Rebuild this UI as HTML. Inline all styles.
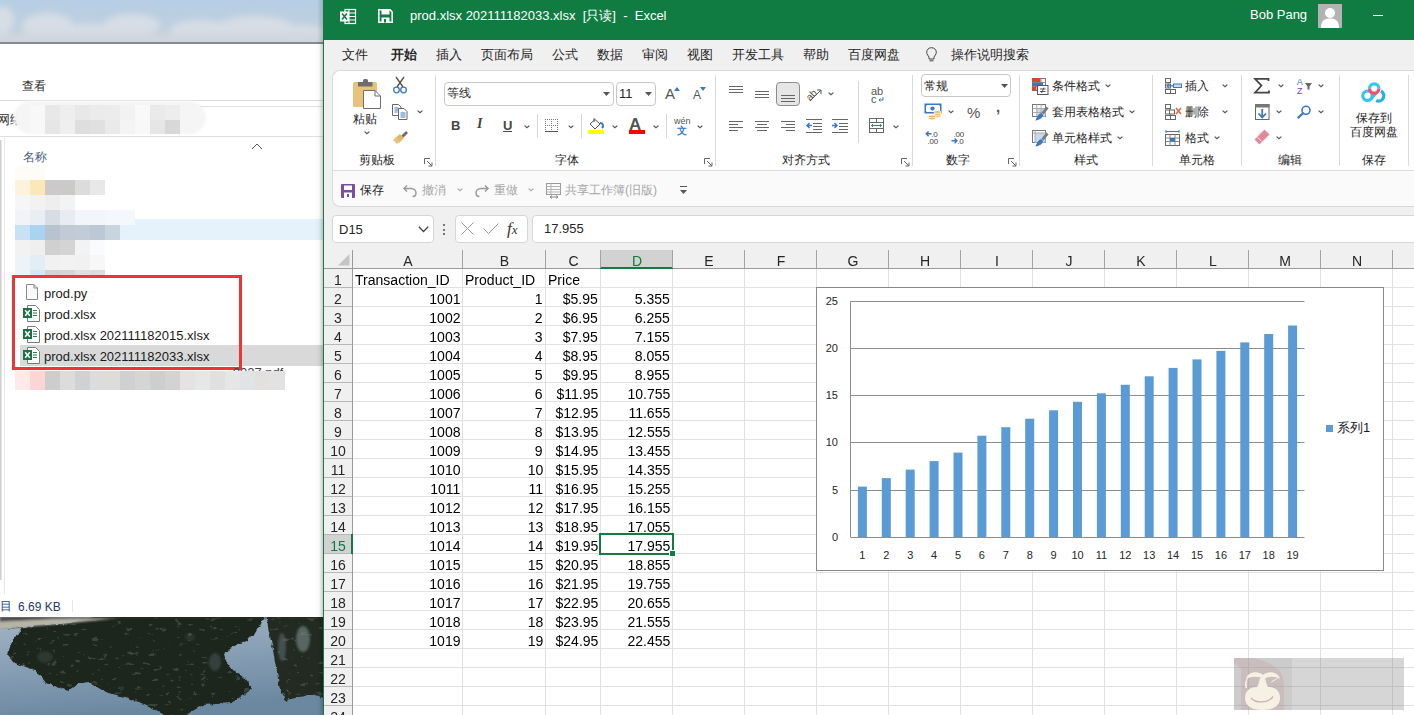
<!DOCTYPE html><html><head><meta charset="utf-8"><style>

*{box-sizing:border-box}
html,body{margin:0;padding:0}
body{width:1414px;height:715px;overflow:hidden;position:relative;font-family:"Liberation Sans",sans-serif;background:#fff;color:#262626}
.a{position:absolute}
.t{position:absolute;white-space:pre;line-height:1}
svg{position:absolute;overflow:visible}

</style></head><body>
<svg style="left:0;top:0;overflow:hidden" width="323" height="44" viewBox="0 0 323 44">
<defs><filter id="cb" x="-20%" y="-50%" width="140%" height="200%"><feGaussianBlur stdDeviation="3"/></filter>
<linearGradient id="sg" x1="0" y1="0" x2="0" y2="1"><stop offset="0" stop-color="#b6cee4"/><stop offset="0.45" stop-color="#bccfe1"/><stop offset="1" stop-color="#c6d0da"/></linearGradient></defs>
<rect width="323" height="43" fill="url(#sg)"/>
<g filter="url(#cb)" fill="#d6dde5">
<ellipse cx="2" cy="20" rx="12" ry="14"/>
<ellipse cx="48" cy="26" rx="26" ry="13"/>
<ellipse cx="90" cy="34" rx="40" ry="10"/>
<ellipse cx="132" cy="25" rx="28" ry="11"/>
<ellipse cx="200" cy="30" rx="30" ry="10"/>
<ellipse cx="255" cy="27" rx="38" ry="11"/>
<ellipse cx="300" cy="34" rx="30" ry="9"/>
<rect x="-10" y="34" width="343" height="12" fill="#d0d6dd"/>
</g>
<rect x="0" y="42" width="323" height="2" fill="#858a91"/>
</svg>
<div class="a" style="left:0px;top:44px;width:323px;height:573px;background:#fff"></div>
<div class="t" style="left:22px;top:80px;font-size:12px;color:#1f1f1f">查看</div>
<div class="a" style="left:0px;top:100px;width:323px;height:1px;background:#dcdcdc"></div>
<div class="t" style="left:-3px;top:113px;font-size:13px;color:#333">网络</div>
<div class="a" style="left:14px;top:101px;width:192px;height:33px;border-radius:17px;background:#f5f5f5;filter:blur(1px)"></div>
<div class="a" style="left:30px;top:105px;width:15px;height:15px;background:#f8f8f8"></div>
<div class="a" style="left:30px;top:120px;width:15px;height:14px;background:#f8f8f8"></div>
<div class="a" style="left:45px;top:105px;width:15px;height:15px;background:#e8e8e8"></div>
<div class="a" style="left:45px;top:120px;width:15px;height:14px;background:#e6e6e6"></div>
<div class="a" style="left:60px;top:105px;width:15px;height:15px;background:#eeeeee"></div>
<div class="a" style="left:60px;top:120px;width:15px;height:14px;background:#efefef"></div>
<div class="a" style="left:75px;top:105px;width:15px;height:15px;background:#e8e8e8"></div>
<div class="a" style="left:75px;top:120px;width:15px;height:14px;background:#dedede"></div>
<div class="a" style="left:90px;top:105px;width:15px;height:15px;background:#ebebeb"></div>
<div class="a" style="left:90px;top:120px;width:15px;height:14px;background:#e0e0e0"></div>
<div class="a" style="left:105px;top:105px;width:15px;height:15px;background:#ececec"></div>
<div class="a" style="left:105px;top:120px;width:15px;height:14px;background:#eaeaea"></div>
<div class="a" style="left:120px;top:105px;width:15px;height:15px;background:#f2f2f2"></div>
<div class="a" style="left:120px;top:120px;width:15px;height:14px;background:#f4f4f4"></div>
<div class="a" style="left:135px;top:105px;width:15px;height:15px;background:#f9f9f9"></div>
<div class="a" style="left:135px;top:120px;width:15px;height:14px;background:#f8f8f8"></div>
<div class="a" style="left:150px;top:105px;width:15px;height:15px;background:#eaeaea"></div>
<div class="a" style="left:150px;top:120px;width:15px;height:14px;background:#e6e6e6"></div>
<div class="a" style="left:165px;top:105px;width:15px;height:15px;background:#ededed"></div>
<div class="a" style="left:165px;top:120px;width:15px;height:14px;background:#d8d8d8"></div>
<div class="a" style="left:200px;top:106px;width:123px;height:1px;background:#e0e0e0"></div>
<div class="a" style="left:0px;top:136px;width:323px;height:1px;background:#e0e0e0"></div>
<div class="a" style="left:4px;top:138px;width:1px;height:456px;background:#e6e6e6"></div>
<div class="a" style="left:0px;top:140px;width:2px;height:440px;background:linear-gradient(90deg,#c6c6c6,#eeeeee)"></div>
<div class="t" style="left:23px;top:151px;font-size:12px;color:#4c607a">名称</div>
<svg style="left:251px;top:143px" width="12" height="7" viewBox="0 0 12 7"><path d="M1 6 L6 1 L11 6" fill="none" stroke="#555" stroke-width="1"/></svg>
<div class="a" style="left:120px;top:219px;width:203px;height:21px;background:#e5f1fb"></div>
<div class="a" style="left:15px;top:165px;width:30px;height:15px;background:#fefcf6;border-radius:8px 8px 0 0"></div>
<div class="a" style="left:15px;top:180px;width:15px;height:15px;background:#fdf3dc"></div>
<div class="a" style="left:30px;top:180px;width:15px;height:15px;background:#fbe9b5"></div>
<div class="a" style="left:45px;top:180px;width:15px;height:15px;background:#cbc9c9"></div>
<div class="a" style="left:60px;top:180px;width:15px;height:15px;background:#cacac8"></div>
<div class="a" style="left:75px;top:180px;width:15px;height:15px;background:#dcdcdc"></div>
<div class="a" style="left:90px;top:180px;width:15px;height:15px;background:#e8e8e8"></div>
<div class="a" style="left:15px;top:195px;width:15px;height:15px;background:#f6f6f6"></div>
<div class="a" style="left:30px;top:195px;width:15px;height:15px;background:#f2f2f2"></div>
<div class="a" style="left:45px;top:195px;width:15px;height:15px;background:#eeeeee"></div>
<div class="a" style="left:60px;top:195px;width:15px;height:15px;background:#f2f3f4"></div>
<div class="a" style="left:15px;top:210px;width:15px;height:15px;background:#f0f4f8"></div>
<div class="a" style="left:30px;top:210px;width:15px;height:15px;background:#e9eef3"></div>
<div class="a" style="left:45px;top:210px;width:15px;height:15px;background:#d8dde5"></div>
<div class="a" style="left:60px;top:210px;width:15px;height:15px;background:#e8ecf2"></div>
<div class="a" style="left:75px;top:210px;width:15px;height:15px;background:#f2f6fb"></div>
<div class="a" style="left:90px;top:210px;width:15px;height:15px;background:#f2f6fb"></div>
<div class="a" style="left:105px;top:210px;width:15px;height:15px;background:#f4f7fb"></div>
<div class="a" style="left:120px;top:210px;width:15px;height:15px;background:#f4f7fb"></div>
<div class="a" style="left:15px;top:225px;width:15px;height:15px;background:#c8e2f5"></div>
<div class="a" style="left:30px;top:225px;width:15px;height:15px;background:#a9d3ee"></div>
<div class="a" style="left:45px;top:225px;width:15px;height:15px;background:#b7c4d0"></div>
<div class="a" style="left:60px;top:225px;width:15px;height:15px;background:#c1cad5"></div>
<div class="a" style="left:75px;top:225px;width:15px;height:15px;background:#c1ccd8"></div>
<div class="a" style="left:90px;top:225px;width:15px;height:15px;background:#bcc8d4"></div>
<div class="a" style="left:105px;top:225px;width:15px;height:15px;background:#c8d4de"></div>
<div class="a" style="left:15px;top:240px;width:15px;height:15px;background:#f2f2f2"></div>
<div class="a" style="left:30px;top:240px;width:15px;height:15px;background:#efefef"></div>
<div class="a" style="left:45px;top:240px;width:15px;height:15px;background:#d0d0d0"></div>
<div class="a" style="left:60px;top:240px;width:15px;height:15px;background:#d4d4d4"></div>
<div class="a" style="left:75px;top:240px;width:15px;height:15px;background:#f2f3f4"></div>
<div class="a" style="left:90px;top:240px;width:15px;height:15px;background:#fafbfc"></div>
<div class="a" style="left:15px;top:255px;width:15px;height:15px;background:#eef3f8"></div>
<div class="a" style="left:30px;top:255px;width:15px;height:15px;background:#e2edf5"></div>
<div class="a" style="left:45px;top:255px;width:15px;height:15px;background:#f1f1f1"></div>
<div class="a" style="left:60px;top:255px;width:15px;height:15px;background:#f2f2f2"></div>
<div class="a" style="left:75px;top:255px;width:15px;height:15px;background:#f1f1f1"></div>
<div class="a" style="left:90px;top:255px;width:15px;height:15px;background:#f7f7f7"></div>
<div class="a" style="left:15px;top:270px;width:15px;height:5px;background:#eef3f8"></div>
<div class="a" style="left:30px;top:270px;width:15px;height:5px;background:#d7e8f5"></div>
<div class="a" style="left:45px;top:270px;width:15px;height:5px;background:#d3d3d3"></div>
<div class="a" style="left:60px;top:270px;width:15px;height:5px;background:#d5d5d5"></div>
<div class="a" style="left:75px;top:270px;width:15px;height:5px;background:#e0e0e0"></div>
<div class="a" style="left:90px;top:270px;width:15px;height:5px;background:#dcdcdc"></div>
<div class="a" style="left:20px;top:345px;width:303px;height:21px;background:#d9d9d9"></div>
<svg style="left:26px;top:284px" width="12" height="16" viewBox="0 0 12 16"><path d="M0.5 0.5 H8 L11.5 4 V15.5 H0.5 Z" fill="#f8f8f8" stroke="#8a8a8a" stroke-width="1"/><path d="M8 0.5 V4 H11.5" fill="none" stroke="#8a8a8a"/></svg>
<div class="t" style="left:44px;top:287px;font-size:13px;color:#1a1a1a">prod.py</div>
<svg style="left:23px;top:305px" width="17" height="17" viewBox="0 0 17 17"><path d="M4.5 0.5 H12.5 L16.5 4.5 V16.5 H4.5 Z" fill="#fff" stroke="#7a7a7a" stroke-width="1"/><path d="M10 5.5 h4 M10 8 h4 M10 10.5 h4" stroke="#2f7d4b" stroke-width="1.2"/><rect x="0" y="3" width="9" height="10" fill="#1d7044"/><path d="M2.2 5.2 L6.8 10.8 M6.8 5.2 L2.2 10.8" stroke="#fff" stroke-width="1.5"/></svg>
<div class="t" style="left:44px;top:308px;font-size:13px;color:#1a1a1a">prod.xlsx</div>
<svg style="left:23px;top:326px" width="17" height="17" viewBox="0 0 17 17"><path d="M4.5 0.5 H12.5 L16.5 4.5 V16.5 H4.5 Z" fill="#fff" stroke="#7a7a7a" stroke-width="1"/><path d="M10 5.5 h4 M10 8 h4 M10 10.5 h4" stroke="#2f7d4b" stroke-width="1.2"/><rect x="0" y="3" width="9" height="10" fill="#1d7044"/><path d="M2.2 5.2 L6.8 10.8 M6.8 5.2 L2.2 10.8" stroke="#fff" stroke-width="1.5"/></svg>
<div class="t" style="left:44px;top:329px;font-size:13px;color:#1a1a1a">prod.xlsx 202111182015.xlsx</div>
<svg style="left:23px;top:347px" width="17" height="17" viewBox="0 0 17 17"><path d="M4.5 0.5 H12.5 L16.5 4.5 V16.5 H4.5 Z" fill="#fff" stroke="#7a7a7a" stroke-width="1"/><path d="M10 5.5 h4 M10 8 h4 M10 10.5 h4" stroke="#2f7d4b" stroke-width="1.2"/><rect x="0" y="3" width="9" height="10" fill="#1d7044"/><path d="M2.2 5.2 L6.8 10.8 M6.8 5.2 L2.2 10.8" stroke="#fff" stroke-width="1.5"/></svg>
<div class="t" style="left:44px;top:350px;font-size:13px;color:#1a1a1a">prod.xlsx 202111182033.xlsx</div>
<div class="a" style="left:12px;top:275px;width:230px;height:95px;border:3px solid #ee3434"></div>
<div class="a" style="left:15px;top:371px;width:15px;height:19px;background:#fdeaea"></div>
<div class="a" style="left:30px;top:371px;width:15px;height:19px;background:#fcd6d6"></div>
<div class="a" style="left:45px;top:371px;width:15px;height:19px;background:#cdcdcd"></div>
<div class="a" style="left:60px;top:371px;width:15px;height:19px;background:#dddcdb"></div>
<div class="a" style="left:75px;top:371px;width:15px;height:19px;background:#d0d1d2"></div>
<div class="a" style="left:90px;top:371px;width:15px;height:19px;background:#dcdcdc"></div>
<div class="a" style="left:105px;top:371px;width:15px;height:19px;background:#dddcda"></div>
<div class="a" style="left:120px;top:371px;width:15px;height:19px;background:#cfd0d1"></div>
<div class="a" style="left:135px;top:371px;width:15px;height:19px;background:#d6d5d5"></div>
<div class="a" style="left:150px;top:371px;width:15px;height:19px;background:#cdcfcf"></div>
<div class="a" style="left:165px;top:371px;width:15px;height:19px;background:#d3d3d3"></div>
<div class="a" style="left:180px;top:371px;width:15px;height:19px;background:#e4e2e2"></div>
<div class="a" style="left:195px;top:371px;width:15px;height:19px;background:#e6e8e8"></div>
<div class="a" style="left:210px;top:371px;width:15px;height:19px;background:#e0e0e0"></div>
<div class="a" style="left:225px;top:371px;width:15px;height:19px;background:#e6e6e6"></div>
<div class="a" style="left:240px;top:371px;width:15px;height:19px;background:#e2e3e4"></div>
<div class="a" style="left:255px;top:371px;width:15px;height:19px;background:#e3e1df"></div>
<div class="a" style="left:270px;top:371px;width:15px;height:19px;background:#e2e2e2"></div>
<div class="t" style="left:222px;top:366px;font-size:13px;color:#444;clip-path:inset(0 0 62% 0)">...0027.pdf</div>
<div class="t" style="left:0px;top:600px;font-size:12px;color:#1e4d8a">目</div>
<div class="t" style="left:18px;top:601px;font-size:12px;color:#1e3a66">6.69 KB</div>
<div class="a" style="left:72px;top:600px;width:1px;height:12px;background:#e6e6e6"></div>
<svg style="left:0;top:617px;overflow:hidden" width="323" height="98" viewBox="0 0 323 98">
<defs>
<filter id="rough" x="-5%" y="-5%" width="110%" height="110%"><feTurbulence type="fractalNoise" baseFrequency="0.18" numOctaves="2" seed="3" result="n"/><feDisplacementMap in="SourceGraphic" in2="n" scale="5" xChannelSelector="R" yChannelSelector="G" result="d"/><feGaussianBlur in="d" stdDeviation="0.7"/></filter>
<filter id="bl"><feGaussianBlur stdDeviation="0.8"/></filter>
<filter id="spots2" x="0" y="0" width="100%" height="100%"><feTurbulence type="fractalNoise" baseFrequency="0.12 0.2" numOctaves="3" seed="11" result="t"/><feColorMatrix in="t" type="matrix" values="0 0 0 0 0.42  0 0 0 0 0.5  0 0 0 0 0.55  13 0 0 0 -8.7" result="m"/><feGaussianBlur in="m" stdDeviation="0.5" result="mb"/></filter>
<filter id="spots" x="0" y="0" width="100%" height="100%"><feTurbulence type="fractalNoise" baseFrequency="0.35" numOctaves="1" seed="7"/><feColorMatrix type="matrix" values="0 0 0 0 0.35  0 0 0 0 0.42  0 0 0 0 0.38  0 0 0 -2.2 1.25"/></filter>
<linearGradient id="wg" x1="0" y1="0" x2="0.25" y2="1"><stop offset="0" stop-color="#a2b4c5"/><stop offset="0.55" stop-color="#859db3"/><stop offset="1" stop-color="#6c88a1"/></linearGradient>
<clipPath id="tc"><path d="M21 11 L12 25 L7 38 L14 46 L35 53 L44 65 L68 74 L77 67 L89 65 L105 75 L128 81 L149 90 L163 97 L165 100 L182 100 L203 88 L231 86 L253 72 L243 60 L233 53 L226 44 L224 37 L233 30 L254 18 L261 6 L266 0 L125 0 L70 6 L0 12 Z M266 0 L330 0 L330 84 L315 78 L300 80 L286 83 L280 72 L276 50 L272 28 L268 10 Z"/></clipPath>
</defs>
<rect width="323" height="98" fill="url(#wg)"/>
<g filter="url(#rough)">
<path d="M21 11 L12 25 L7 38 L14 46 L35 53 L44 65 L68 74 L77 67 L89 65 L105 75 L128 81 L149 90 L163 97 L165 100 L182 100 L203 88 L231 86 L253 72 L243 60 L233 53 L226 44 L224 37 L233 30 L254 18 L261 6 L266 -8 L125 -8 L70 6 L0 12 Z" fill="#1d261c"/>
<path d="M266 -8 L330 -8 L330 84 L315 78 L300 80 L286 83 L280 72 L276 50 L272 28 L268 10 Z" fill="#232c20"/>
</g>
<g filter="url(#bl)">
<ellipse cx="303" cy="22" rx="7" ry="13" fill="#7d8c8c" opacity="0.6"/>
<ellipse cx="282" cy="30" rx="4" ry="14" fill="#6e7f85" opacity="0.45"/>
<ellipse cx="215" cy="45" rx="6" ry="9" fill="#5a6a6e" opacity="0.4"/>
<ellipse cx="45" cy="40" rx="8" ry="6" fill="#4a5858" opacity="0.35"/>
<ellipse cx="190" cy="20" rx="5" ry="4" fill="#4a5858" opacity="0.3"/>
</g>
<rect width="323" height="98" filter="url(#spots2)" clip-path="url(#tc)" opacity="0.2"/>
<g filter="url(#bl)">
<path d="M0 0 H95 L0 5 Z" fill="#5c5a52"/>
<path d="M0 5 L95 0 L130 0 L70 6 L0 12 Z" fill="#b7b4a6"/>
<path d="M0 0 H323 V1.5 H0 Z" fill="#2a2d28"/>
</g>
</svg>
<div class="a" style="left:315px;top:43px;width:8px;height:672px;background:linear-gradient(90deg,rgba(0,0,0,0),rgba(0,0,0,0.03) 50%,rgba(0,0,0,0.2))"></div>
<div class="a" style="left:317px;top:0px;width:6px;height:43px;background:linear-gradient(90deg,rgba(0,0,0,0),rgba(0,0,0,0.15))"></div>
<div class="a" style="left:323px;top:0px;width:1091px;height:40px;background:#107c41"></div>
<div class="a" style="left:323px;top:40px;width:1px;height:675px;background:#107c41"></div>
<div class="a" style="left:324px;top:40px;width:1090px;height:210px;background:#f0f0f0"></div>
<svg style="left:340px;top:9px" width="16" height="15" viewBox="0 0 16 15"><rect x="5" y="0.5" width="10.5" height="14" fill="none" stroke="#fff" stroke-width="1.2"/><path d="M9 0.5 V14.5 M5 4 H15.5 M5 7.5 H15.5 M5 11 H15.5" stroke="#fff" stroke-width="1.1"/><rect x="0" y="2.5" width="9" height="10" fill="#fff"/><path d="M2 4.5 L7 10.5 M7 4.5 L2 10.5" stroke="#107c41" stroke-width="1.6"/></svg>
<svg style="left:378px;top:9px" width="15" height="14" viewBox="0 0 15 14"><path d="M0.8 0.8 H12 L14.2 3 V13.2 H0.8 Z" fill="none" stroke="#fff" stroke-width="1.6"/><rect x="3.5" y="1" width="8" height="4.5" fill="#fff"/><rect x="3.5" y="8.5" width="8" height="5" fill="#fff"/><rect x="6" y="10" width="2" height="3.5" fill="#107c41"/></svg>
<div class="t" style="left:410px;top:9px;font-size:13px;color:#fff">prod.xlsx 202111182033.xlsx  [只读]  -  Excel</div>
<div class="t" style="left:1250px;top:8px;font-size:13px;color:#fff">Bob Pang</div>
<div class="a" style="left:1318px;top:4px;width:24px;height:24px;background:#b3b3b3"></div>
<svg style="left:1318px;top:4px" width="24" height="24" viewBox="0 0 24 24"><circle cx="12" cy="9" r="5" fill="#fff"/><path d="M3 24 C3 16 7 14.5 12 14.5 C17 14.5 21 16 21 24 Z" fill="#fff"/></svg>
<div class="a" style="left:1373px;top:15px;width:10px;height:1px;background:#fff"></div>
<div class="t" style="left:342px;top:48px;font-size:13px;color:#262626">文件</div>
<div class="t" style="left:391px;top:48px;font-size:13px;color:#262626;font-weight:bold">开始</div>
<div class="t" style="left:436px;top:48px;font-size:13px;color:#262626">插入</div>
<div class="t" style="left:481px;top:48px;font-size:13px;color:#262626">页面布局</div>
<div class="t" style="left:552px;top:48px;font-size:13px;color:#262626">公式</div>
<div class="t" style="left:597px;top:48px;font-size:13px;color:#262626">数据</div>
<div class="t" style="left:642px;top:48px;font-size:13px;color:#262626">审阅</div>
<div class="t" style="left:687px;top:48px;font-size:13px;color:#262626">视图</div>
<div class="t" style="left:732px;top:48px;font-size:13px;color:#262626">开发工具</div>
<div class="t" style="left:803px;top:48px;font-size:13px;color:#262626">帮助</div>
<div class="t" style="left:848px;top:48px;font-size:13px;color:#262626">百度网盘</div>
<div class="t" style="left:951px;top:48px;font-size:13px;color:#262626">操作说明搜索</div>
<svg style="left:926px;top:47px" width="11" height="15" viewBox="0 0 11 15"><path d="M5.5 0.7 C2.6 0.7 0.7 2.8 0.7 5.3 C0.7 7.5 2.4 8.6 3 10.2 V12 H8 V10.2 C8.6 8.6 10.3 7.5 10.3 5.3 C10.3 2.8 8.4 0.7 5.5 0.7 Z" fill="none" stroke="#444" stroke-width="1"/><path d="M3.5 13.8 H7.5" stroke="#444" stroke-width="1"/></svg>
<div class="a" style="left:332px;top:70px;width:1100px;height:137px;background:#fafafa;border:1px solid #d9d9d9;border-right:none;border-radius:8px 0 0 8px"></div>
<div class="a" style="left:333px;top:71px;width:1100px;height:100px;background:#fff;border-radius:7px 0 0 0;border-bottom:1px solid #dcdcdc"></div>
<div class="a" style="left:435px;top:75px;width:1px;height:91px;background:#dadada"></div>
<div class="a" style="left:715px;top:75px;width:1px;height:91px;background:#dadada"></div>
<div class="a" style="left:912px;top:75px;width:1px;height:91px;background:#dadada"></div>
<div class="a" style="left:1019px;top:75px;width:1px;height:91px;background:#dadada"></div>
<div class="a" style="left:1152px;top:75px;width:1px;height:91px;background:#dadada"></div>
<div class="a" style="left:1241px;top:75px;width:1px;height:91px;background:#dadada"></div>
<div class="a" style="left:1339px;top:75px;width:1px;height:91px;background:#dadada"></div>
<div class="a" style="left:1408px;top:75px;width:1px;height:91px;background:#dadada"></div>
<div class="t" style="left:359px;top:154px;font-size:12px;color:#262626">剪贴板</div>
<div class="t" style="left:555px;top:154px;font-size:12px;color:#262626">字体</div>
<div class="t" style="left:782px;top:154px;font-size:12px;color:#262626">对齐方式</div>
<div class="t" style="left:946px;top:154px;font-size:12px;color:#262626">数字</div>
<div class="t" style="left:1074px;top:154px;font-size:12px;color:#262626">样式</div>
<div class="t" style="left:1179px;top:154px;font-size:12px;color:#262626">单元格</div>
<div class="t" style="left:1278px;top:154px;font-size:12px;color:#262626">编辑</div>
<div class="t" style="left:1362px;top:154px;font-size:12px;color:#262626">保存</div>
<svg style="left:424px;top:158px" width="9" height="9" viewBox="0 0 9 9"><path d="M0.5 6 V0.5 H6" fill="none" stroke="#666" stroke-width="1"/><path d="M3 3 L8 8 M8 4.5 V8 H4.5" fill="none" stroke="#666" stroke-width="1"/></svg>
<svg style="left:704px;top:158px" width="9" height="9" viewBox="0 0 9 9"><path d="M0.5 6 V0.5 H6" fill="none" stroke="#666" stroke-width="1"/><path d="M3 3 L8 8 M8 4.5 V8 H4.5" fill="none" stroke="#666" stroke-width="1"/></svg>
<svg style="left:901px;top:158px" width="9" height="9" viewBox="0 0 9 9"><path d="M0.5 6 V0.5 H6" fill="none" stroke="#666" stroke-width="1"/><path d="M3 3 L8 8 M8 4.5 V8 H4.5" fill="none" stroke="#666" stroke-width="1"/></svg>
<svg style="left:1008px;top:158px" width="9" height="9" viewBox="0 0 9 9"><path d="M0.5 6 V0.5 H6" fill="none" stroke="#666" stroke-width="1"/><path d="M3 3 L8 8 M8 4.5 V8 H4.5" fill="none" stroke="#666" stroke-width="1"/></svg>
<svg style="left:353px;top:79px" width="29" height="31" viewBox="0 0 29 31"><rect x="0" y="3" width="24" height="25" rx="1.5" fill="#e8c27a"/><path d="M5 3 H19.5 V7.5 H5 Z" fill="#6e6e6e"/><rect x="10" y="0" width="5" height="4" rx="1.5" fill="#6e6e6e"/><path d="M10.5 11.5 H22 L27.5 17 V29.5 H10.5 Z" fill="#fff" stroke="#6e6e6e" stroke-width="1"/><path d="M22 11.5 V17 H27.5" fill="none" stroke="#6e6e6e"/></svg>
<div class="t" style="left:353px;top:113px;font-size:12px;color:#262626">粘贴</div>
<svg style="left:364px;top:131px" width="6" height="3" viewBox="0 0 6 3"><path d="M0.6 0.6 L3 2.8 L5.4 0.6" fill="none" stroke="#555" stroke-width="1.2"/></svg>
<svg style="left:393px;top:77px" width="14" height="17" viewBox="0 0 14 17"><path d="M3 0 L10 10 M11 0 L4 10" stroke="#555" stroke-width="1.4"/><circle cx="3.5" cy="13" r="2.8" fill="none" stroke="#3b78c0" stroke-width="1.3"/><circle cx="10.5" cy="13" r="2.8" fill="none" stroke="#3b78c0" stroke-width="1.3"/></svg>
<svg style="left:392px;top:104px" width="16" height="16" viewBox="0 0 16 16"><path d="M0.5 0.5 H6.5 L9 3 V11.5 H0.5 Z" fill="#fff" stroke="#666"/><path d="M6.5 4.5 H12 L15 7.5 V15.5 H6.5 Z" fill="#fff" stroke="#666"/><path d="M2.5 4 h4 M2.5 6 h4 M2.5 8 h3 M8.5 9 h5 M8.5 11 h5 M8.5 13 h5" stroke="#3b78c0"/></svg>
<svg style="left:417px;top:110px" width="6" height="3" viewBox="0 0 6 3"><path d="M0.6 0.6 L3 2.8 L5.4 0.6" fill="none" stroke="#555" stroke-width="1.2"/></svg>
<svg style="left:393px;top:131px" width="15" height="13" viewBox="0 0 15 13"><path d="M8 5 L13 0 L15 2 L10 7 Z" fill="#6e6e6e"/><path d="M2 7 L7 3 L11 7 L6 12 Z" fill="#e3b66b"/><path d="M0 9 L3 6 L7 10 L4 13 Z" fill="#e8c27a"/></svg>
<div class="a" style="left:444px;top:82px;width:170px;height:24px;border:1px solid #c8c8c8;border-radius:4px;background:#fff"></div>
<div class="t" style="left:447px;top:87px;font-size:12px;color:#262626">等线</div>
<svg style="left:603px;top:92px" width="7" height="4" viewBox="0 0 7 4"><path d="M0 0 H7 L3.5 4 Z" fill="#555"/></svg>
<div class="a" style="left:616px;top:82px;width:40px;height:24px;border:1px solid #c8c8c8;border-radius:4px;background:#fff"></div>
<div class="t" style="left:619px;top:87px;font-size:13px;color:#262626">11</div>
<svg style="left:645px;top:92px" width="7" height="4" viewBox="0 0 7 4"><path d="M0 0 H7 L3.5 4 Z" fill="#555"/></svg>
<div class="t" style="left:665px;top:86px;font-size:15px;color:#555">A</div>
<svg style="left:674px;top:87px" width="6" height="4" viewBox="0 0 6 4"><path d="M0 4 L3 0 L6 4 Z" fill="#3b78c0"/></svg>
<div class="t" style="left:693px;top:89px;font-size:12px;color:#555">A</div>
<svg style="left:700px;top:87px" width="6" height="4" viewBox="0 0 6 4"><path d="M0 0 L3 4 L6 0 Z" fill="#3b78c0"/></svg>
<div class="t" style="left:451px;top:119px;font-size:13px;color:#444;font-weight:bold">B</div>
<div class="t" style="left:477px;top:117px;font-size:13px;color:#444;font-style:italic;font-weight:bold;font-family:'Liberation Serif',serif;font-size:14px">I</div>
<div class="t" style="left:503px;top:119px;font-size:13px;color:#444;font-weight:bold">U</div>
<div class="a" style="left:503px;top:131px;width:9px;height:1px;background:#444"></div>
<svg style="left:524px;top:125px" width="6" height="3" viewBox="0 0 6 3"><path d="M0.6 0.6 L3 2.8 L5.4 0.6" fill="none" stroke="#555" stroke-width="1.2"/></svg>
<div class="a" style="left:537px;top:114px;width:1px;height:24px;background:#d6d6d6"></div>
<svg style="left:545px;top:119px" width="14" height="14" viewBox="0 0 14 14"><path d="M0.5 0 V12 M6.5 0 V12 M12.5 0 V12 M0 0.5 H13 M0 6.5 H13" stroke="#777" stroke-dasharray="1,1"/><path d="M0 12.5 H13" stroke="#555"/></svg>
<svg style="left:568px;top:125px" width="6" height="3" viewBox="0 0 6 3"><path d="M0.6 0.6 L3 2.8 L5.4 0.6" fill="none" stroke="#555" stroke-width="1.2"/></svg>
<div class="a" style="left:581px;top:114px;width:1px;height:24px;background:#d6d6d6"></div>
<svg style="left:588px;top:118px" width="17" height="16" viewBox="0 0 17 16"><path d="M2 6 L7 1.5 L12 6 L7 11 Z" fill="none" stroke="#555"/><path d="M6 0 V4" stroke="#555"/><path d="M12 5 C15 5 16 8 14 10" fill="none" stroke="#3b78c0" stroke-width="2"/><rect x="0" y="12" width="16" height="4" fill="#ffff00"/></svg>
<svg style="left:612px;top:125px" width="6" height="3" viewBox="0 0 6 3"><path d="M0.6 0.6 L3 2.8 L5.4 0.6" fill="none" stroke="#555" stroke-width="1.2"/></svg>
<div class="t" style="left:629px;top:116px;font-size:17px;color:#555;font-weight:bold">A</div>
<div class="a" style="left:629px;top:130px;width:16px;height:4px;background:#ff0000"></div>
<svg style="left:653px;top:125px" width="6" height="3" viewBox="0 0 6 3"><path d="M0.6 0.6 L3 2.8 L5.4 0.6" fill="none" stroke="#555" stroke-width="1.2"/></svg>
<div class="a" style="left:666px;top:114px;width:1px;height:24px;background:#d6d6d6"></div>
<div class="t" style="left:674px;top:117px;font-size:9px;color:#555">wén</div>
<div class="t" style="left:677px;top:126px;font-size:10px;color:#3b78c0;font-weight:bold">文</div>
<svg style="left:697px;top:125px" width="6" height="3" viewBox="0 0 6 3"><path d="M0.6 0.6 L3 2.8 L5.4 0.6" fill="none" stroke="#555" stroke-width="1.2"/></svg>
<svg style="left:729px;top:86px" width="14" height="9" viewBox="0 0 14 9"><rect x="0" y="0" width="14" height="1" fill="#666"/><rect x="0" y="3" width="14" height="1" fill="#666"/><rect x="0" y="6" width="14" height="1" fill="#666"/></svg>
<svg style="left:755px;top:91px" width="14" height="9" viewBox="0 0 14 9"><rect x="0" y="0" width="14" height="1" fill="#666"/><rect x="0" y="3" width="14" height="1" fill="#666"/><rect x="0" y="6" width="14" height="1" fill="#666"/></svg>
<div class="a" style="left:776px;top:82px;width:24px;height:24px;border:1px solid #8c8c8c;border-radius:4px;background:#e6e6e6"></div>
<svg style="left:781px;top:95px" width="14" height="9" viewBox="0 0 14 9"><rect x="0" y="0" width="14" height="1" fill="#666"/><rect x="0" y="3" width="14" height="1" fill="#666"/><rect x="0" y="6" width="14" height="1" fill="#666"/></svg>
<svg style="left:806px;top:87px" width="17" height="15" viewBox="0 0 17 15"><text x="0" y="11" font-size="10" fill="#555" font-family="Liberation Sans" transform="rotate(-45 6 8)">ab</text><path d="M4 14 L15 3 M11 3 H15 V7" fill="none" stroke="#555"/></svg>
<svg style="left:828px;top:92px" width="6" height="3" viewBox="0 0 6 3"><path d="M0.6 0.6 L3 2.8 L5.4 0.6" fill="none" stroke="#555" stroke-width="1.2"/></svg>
<svg style="left:729px;top:121px" width="14" height="12" viewBox="0 0 14 12"><rect x="0" y="0" width="14" height="1" fill="#666"/><rect x="0" y="3" width="9" height="1" fill="#666"/><rect x="0" y="6" width="14" height="1" fill="#666"/><rect x="0" y="9" width="9" height="1" fill="#666"/></svg>
<svg style="left:755px;top:121px" width="14" height="12" viewBox="0 0 14 12"><rect x="0" y="0" width="14" height="1" fill="#666"/><rect x="2" y="3" width="10" height="1" fill="#666"/><rect x="0" y="6" width="14" height="1" fill="#666"/><rect x="2" y="9" width="10" height="1" fill="#666"/></svg>
<svg style="left:781px;top:121px" width="14" height="12" viewBox="0 0 14 12"><rect x="0" y="0" width="14" height="1" fill="#666"/><rect x="5" y="3" width="9" height="1" fill="#666"/><rect x="0" y="6" width="14" height="1" fill="#666"/><rect x="5" y="9" width="9" height="1" fill="#666"/></svg>
<svg style="left:806px;top:119px" width="16" height="14" viewBox="0 0 16 14"><rect x="0" y="0" width="16" height="1" fill="#666"/><rect x="7" y="4" width="9" height="1" fill="#666"/><rect x="7" y="7" width="9" height="1" fill="#666"/><rect x="7" y="10" width="9" height="1" fill="#666"/><rect x="0" y="13" width="16" height="1" fill="#666"/><path d="M6 6.5 H1 M3.5 4 L1 6.5 L3.5 9" fill="none" stroke="#3b78c0" stroke-width="1.5"/></svg>
<svg style="left:832px;top:119px" width="16" height="14" viewBox="0 0 16 14"><rect x="0" y="0" width="16" height="1" fill="#666"/><rect x="7" y="4" width="9" height="1" fill="#666"/><rect x="7" y="7" width="9" height="1" fill="#666"/><rect x="7" y="10" width="9" height="1" fill="#666"/><rect x="0" y="13" width="16" height="1" fill="#666"/><path d="M0 6.5 H5 M2.5 4 L5 6.5 L2.5 9" fill="none" stroke="#3b78c0" stroke-width="1.5"/></svg>
<div class="a" style="left:858px;top:81px;width:1px;height:62px;background:#d6d6d6"></div>
<div class="t" style="left:871px;top:86px;font-size:11px;color:#555">ab</div>
<div class="t" style="left:871px;top:94px;font-size:11px;color:#555">c</div>
<svg style="left:878px;top:97px" width="6" height="5" viewBox="0 0 6 5"><path d="M5 0 V3 H1 M2.5 1.5 L1 3 L2.5 4.5" fill="none" stroke="#3b78c0"/></svg>
<svg style="left:869px;top:118px" width="16" height="15" viewBox="0 0 16 15"><rect x="0.5" y="0.5" width="14" height="14" fill="none" stroke="#666"/><path d="M0.5 4.5 H14.5 M0.5 10.5 H14.5 M7.5 0.5 V4.5 M7.5 10.5 V14.5" stroke="#666"/><path d="M2.5 7.5 H12.5 M4 6 L2.5 7.5 L4 9 M11 6 L12.5 7.5 L11 9" fill="none" stroke="#3b78c0"/></svg>
<svg style="left:893px;top:125px" width="6" height="3" viewBox="0 0 6 3"><path d="M0.6 0.6 L3 2.8 L5.4 0.6" fill="none" stroke="#555" stroke-width="1.2"/></svg>
<div class="a" style="left:921px;top:74px;width:90px;height:23px;border:1px solid #c8c8c8;border-radius:4px;background:#fff"></div>
<div class="t" style="left:924px;top:80px;font-size:12px;color:#262626">常规</div>
<svg style="left:1001px;top:84px" width="7" height="4" viewBox="0 0 7 4"><path d="M0 0 H7 L3.5 4 Z" fill="#555"/></svg>
<svg style="left:924px;top:103px" width="18" height="18" viewBox="0 0 18 18"><rect x="1.25" y="1.25" width="15.5" height="8.5" fill="#fff" stroke="#3b78c0" stroke-width="1.5"/><path d="M1 1 H4 L1 4 Z M17 1 H14 L17 4 Z M1 10 V7 L4 10 Z" fill="#3b78c0"/><circle cx="8.5" cy="5.5" r="2.1" fill="#3b78c0"/><g fill="#e8b860" stroke="#fff" stroke-width="0.7"><ellipse cx="13.5" cy="13" rx="3.6" ry="1.4"/><ellipse cx="13.5" cy="11" rx="3.6" ry="1.4"/><ellipse cx="13.5" cy="9" rx="3.6" ry="1.4"/><ellipse cx="8" cy="15.5" rx="3.6" ry="1.4"/><ellipse cx="8" cy="13.5" rx="3.6" ry="1.4"/></g></svg>
<svg style="left:948px;top:110px" width="6" height="3" viewBox="0 0 6 3"><path d="M0.6 0.6 L3 2.8 L5.4 0.6" fill="none" stroke="#555" stroke-width="1.2"/></svg>
<div class="t" style="left:967px;top:105px;font-size:15px;color:#555">%</div>
<div class="t" style="left:996px;top:99px;font-size:15px;color:#555;font-weight:bold">,</div>
<svg style="left:925px;top:130px" width="16" height="16" viewBox="0 0 16 16"><path d="M6.5 3.8 H1.2 M3.6 1.4 L1.2 3.8 L3.6 6.2" fill="none" stroke="#3b78c0" stroke-width="1.4"/><text x="6.3" y="6.6" font-size="8" fill="#444" font-family="Liberation Sans" letter-spacing="-0.2">.0</text><text x="2.5" y="14.4" font-size="8" fill="#444" font-family="Liberation Sans" letter-spacing="-0.2">.00</text></svg>
<svg style="left:951px;top:130px" width="16" height="16" viewBox="0 0 16 16"><text x="2.5" y="6.6" font-size="8" fill="#444" font-family="Liberation Sans" letter-spacing="-0.2">.00</text><path d="M0.5 10.8 H6 M3.6 8.4 L6 10.8 L3.6 13.2" fill="none" stroke="#3b78c0" stroke-width="1.4"/><text x="6.3" y="14.4" font-size="8" fill="#444" font-family="Liberation Sans" letter-spacing="-0.2">.0</text></svg>
<svg style="left:1032px;top:78px" width="17" height="17" viewBox="0 0 17 17"><rect x="0.5" y="0.5" width="13" height="12" fill="#fff" stroke="#777"/><path d="M9 0.5 V12.5 M0.5 4.5 H13.5 M0.5 8.5 H13.5" stroke="#999"/><rect x="0" y="0" width="8.5" height="4" fill="#d9472b"/><rect x="0" y="4.5" width="11" height="3.5" fill="#3b78c0"/><rect x="0" y="8.5" width="4.5" height="4" fill="#d9472b"/><rect x="5.5" y="7.5" width="10.5" height="9" fill="#fff" stroke="#555"/><path d="M8 11 h5.5 M8 13.5 h5.5 M12 9.5 L9.5 15" stroke="#444" stroke-width="0.9"/></svg>
<div class="t" style="left:1052px;top:80px;font-size:12px;color:#262626">条件格式</div>
<svg style="left:1105px;top:84px" width="6" height="3" viewBox="0 0 6 3"><path d="M0.6 0.6 L3 2.8 L5.4 0.6" fill="none" stroke="#555" stroke-width="1.2"/></svg>
<svg style="left:1032px;top:104px" width="17" height="17" viewBox="0 0 17 17"><rect x="0.5" y="0.5" width="13" height="12" fill="#fff" stroke="#777"/><rect x="5" y="4.5" width="8.5" height="8" fill="#c6d9ee"/><path d="M4.8 0.5 V12.5 M9.1 0.5 V12.5 M0.5 4.5 H13.5 M0.5 8.5 H13.5" stroke="#aaa"/><path d="M14.5 2.5 L16.5 4.5 L11.5 10.5 L9.5 8.5 Z" fill="#7a7a7a"/><path d="M9.2 9 L11.2 11 C10.5 14 7.5 16 3.5 16.5 C4.5 13 6.5 10 9.2 9 Z" fill="#3b78c0"/></svg>
<div class="t" style="left:1052px;top:106px;font-size:12px;color:#262626">套用表格格式</div>
<svg style="left:1129px;top:110px" width="6" height="3" viewBox="0 0 6 3"><path d="M0.6 0.6 L3 2.8 L5.4 0.6" fill="none" stroke="#555" stroke-width="1.2"/></svg>
<svg style="left:1032px;top:130px" width="17" height="17" viewBox="0 0 17 17"><rect x="0.5" y="0.5" width="13" height="12" fill="#fff" stroke="#777"/><rect x="3" y="3" width="10.5" height="9.5" fill="#c6d9ee"/><path d="M0.5 3 H13.5 M3 0.5 V12.5" stroke="#aaa"/><path d="M14.5 2.5 L16.5 4.5 L11.5 10.5 L9.5 8.5 Z" fill="#7a7a7a"/><path d="M9.2 9 L11.2 11 C10.5 14 7.5 16 3.5 16.5 C4.5 13 6.5 10 9.2 9 Z" fill="#3b78c0"/></svg>
<div class="t" style="left:1052px;top:132px;font-size:12px;color:#262626">单元格样式</div>
<svg style="left:1117px;top:136px" width="6" height="3" viewBox="0 0 6 3"><path d="M0.6 0.6 L3 2.8 L5.4 0.6" fill="none" stroke="#555" stroke-width="1.2"/></svg>
<svg style="left:1165px;top:78px" width="17" height="16" viewBox="0 0 17 16"><rect x="0.5" y="0.5" width="5" height="4" fill="none" stroke="#666"/><rect x="0.5" y="11.5" width="5" height="4" fill="none" stroke="#666"/><rect x="0.5" y="6" width="5" height="4" fill="none" stroke="#666"/><rect x="5.5" y="11.5" width="5" height="4" fill="none" stroke="#666"/><rect x="8.5" y="6" width="8" height="3.5" fill="#c9d9ee" stroke="#3b78c0"/><path d="M9 7.8 H2 M4 5.8 L2 7.8 L4 9.8" fill="none" stroke="#3b78c0" stroke-width="1.2"/></svg>
<div class="t" style="left:1185px;top:80px;font-size:12px;color:#262626">插入</div>
<svg style="left:1222px;top:84px" width="6" height="3" viewBox="0 0 6 3"><path d="M0.6 0.6 L3 2.8 L5.4 0.6" fill="none" stroke="#555" stroke-width="1.2"/></svg>
<svg style="left:1165px;top:104px" width="17" height="16" viewBox="0 0 17 16"><rect x="0.5" y="0.5" width="5" height="4" fill="none" stroke="#666"/><rect x="0.5" y="11.5" width="5" height="4" fill="none" stroke="#666"/><rect x="0.5" y="6" width="5" height="4" fill="none" stroke="#666"/><rect x="5.5" y="11.5" width="5" height="4" fill="none" stroke="#666"/><rect x="4.5" y="6" width="5" height="4" fill="#fff" stroke="#666"/><path d="M11 4 L16 10 M16 4 L11 10" stroke="#e8603c" stroke-width="1.4"/></svg>
<div class="t" style="left:1185px;top:106px;font-size:12px;color:#262626">删除</div>
<svg style="left:1222px;top:110px" width="6" height="3" viewBox="0 0 6 3"><path d="M0.6 0.6 L3 2.8 L5.4 0.6" fill="none" stroke="#555" stroke-width="1.2"/></svg>
<svg style="left:1165px;top:130px" width="16" height="17" viewBox="0 0 16 17"><path d="M1 1.5 H14 M1 0 V3 M14 0 V3" stroke="#3b78c0"/><rect x="0.5" y="4.5" width="14" height="11" fill="#fff" stroke="#666"/><path d="M0.5 8 H14.5 M0.5 11.5 H14.5 M5 4.5 V15.5 M10 4.5 V15.5" stroke="#888"/><rect x="5" y="8" width="5" height="3.5" fill="#3b78c0"/></svg>
<div class="t" style="left:1185px;top:132px;font-size:12px;color:#262626">格式</div>
<svg style="left:1214px;top:136px" width="6" height="3" viewBox="0 0 6 3"><path d="M0.6 0.6 L3 2.8 L5.4 0.6" fill="none" stroke="#555" stroke-width="1.2"/></svg>
<svg style="left:1254px;top:78px" width="16" height="16" viewBox="0 0 16 16"><path d="M14.5 3 V0.8 H1 L7.5 7.6 L1 14.6 H15 V12.5" fill="none" stroke="#444" stroke-width="1.7" stroke-linejoin="miter"/></svg>
<svg style="left:1278px;top:84px" width="6" height="3" viewBox="0 0 6 3"><path d="M0.6 0.6 L3 2.8 L5.4 0.6" fill="none" stroke="#555" stroke-width="1.2"/></svg>
<svg style="left:1297px;top:78px" width="16" height="16" viewBox="0 0 16 16"><text x="-0.3" y="7" font-size="9" fill="#3b78c0" font-family="Liberation Sans">A</text><text x="0" y="15.7" font-size="9" fill="#7a3fbf" font-family="Liberation Sans">Z</text><path d="M8 5 H15 L12.5 8.5 V11.5 H10.5 V8.5 Z" fill="#666"/></svg>
<svg style="left:1318px;top:84px" width="6" height="3" viewBox="0 0 6 3"><path d="M0.6 0.6 L3 2.8 L5.4 0.6" fill="none" stroke="#555" stroke-width="1.2"/></svg>
<svg style="left:1255px;top:104px" width="15" height="16" viewBox="0 0 15 16"><rect x="0.5" y="0.5" width="13.5" height="15" fill="#fff" stroke="#666"/><rect x="0" y="0" width="14.5" height="3.5" fill="#777"/><path d="M7.2 5 V12.5" stroke="#3b78c0" stroke-width="1.8"/><path d="M3.5 9.5 L7.2 13.5 L11 9.5" fill="none" stroke="#3b78c0" stroke-width="1.8"/></svg>
<svg style="left:1276px;top:110px" width="6" height="3" viewBox="0 0 6 3"><path d="M0.6 0.6 L3 2.8 L5.4 0.6" fill="none" stroke="#555" stroke-width="1.2"/></svg>
<svg style="left:1297px;top:105px" width="14" height="14" viewBox="0 0 14 14"><circle cx="9" cy="5.3" r="4" fill="none" stroke="#3b78c0" stroke-width="1.6"/><path d="M6 8.3 L1.3 12.6" stroke="#3b78c0" stroke-width="2.2" stroke-linecap="round"/></svg>
<svg style="left:1318px;top:110px" width="6" height="3" viewBox="0 0 6 3"><path d="M0.6 0.6 L3 2.8 L5.4 0.6" fill="none" stroke="#555" stroke-width="1.2"/></svg>
<svg style="left:1254px;top:129px" width="16" height="16" viewBox="0 0 16 16"><path d="M10.5 1.5 L14.5 5.5 L5.5 14.5 L1.5 10.5 Z" fill="#e8879a" stroke="#e8879a" stroke-width="1.4" stroke-linejoin="round"/><path d="M3.6 8.4 L7.6 12.4" stroke="#fff" stroke-width="1"/></svg>
<svg style="left:1276px;top:136px" width="6" height="3" viewBox="0 0 6 3"><path d="M0.6 0.6 L3 2.8 L5.4 0.6" fill="none" stroke="#555" stroke-width="1.2"/></svg>
<svg style="left:1360px;top:80px" width="29" height="24" viewBox="0 0 29 24"><circle cx="7.5" cy="15.7" r="4.7" fill="none" stroke="#33c3f3" stroke-width="3.2"/><path d="M16.2 20.5 A4.7 4.7 0 1 0 20.9 11" fill="none" stroke="#1fb0f0" stroke-width="3.2"/><path d="M10.8 19 L16 13" stroke="#33c3f3" stroke-width="3.2"/><path d="M9.5 8.5 A4.7 4.7 0 0 1 18.9 8.5" fill="none" stroke="#35c6f4" stroke-width="3.2"/><path d="M9.5 8.5 A4.7 4.7 0 0 0 18.9 8.5" fill="none" stroke="#f2506e" stroke-width="3.2"/></svg>
<div class="t" style="left:1356px;top:112px;font-size:12px;color:#262626">保存到</div>
<div class="t" style="left:1350px;top:126px;font-size:12px;color:#262626">百度网盘</div>
<svg style="left:341px;top:184px" width="14" height="14" viewBox="0 0 14 14"><rect x="0" y="0" width="14" height="14" rx="1" fill="#7b4ba6"/><rect x="3" y="1.5" width="8" height="4.5" fill="#fff"/><rect x="3" y="8.5" width="8" height="5.5" fill="#fff"/><rect x="6" y="10" width="2" height="3" fill="#7b4ba6"/></svg>
<div class="t" style="left:360px;top:184px;font-size:12px;color:#262626">保存</div>
<svg style="left:403px;top:184px" width="14" height="13" viewBox="0 0 14 13"><path d="M4 1.5 L1 4.5 L4 7.5" fill="none" stroke="#9a9a9a" stroke-width="1.5"/><path d="M1.5 4.5 H8 C11 4.5 13 6.5 13 9 C13 11 11.5 12.5 9.5 12.5" fill="none" stroke="#9a9a9a" stroke-width="1.5"/></svg>
<div class="t" style="left:422px;top:184px;font-size:12px;color:#a6a6a6">撤消</div>
<svg style="left:457px;top:188px" width="6" height="3" viewBox="0 0 6 3"><path d="M0.6 0.6 L3 2.8 L5.4 0.6" fill="none" stroke="#aaa" stroke-width="1.2"/></svg>
<svg style="left:475px;top:184px" width="14" height="13" viewBox="0 0 14 13"><path d="M10 1.5 L13 4.5 L10 7.5" fill="none" stroke="#9a9a9a" stroke-width="1.5"/><path d="M12.5 4.5 H6 C3 4.5 1 6.5 1 9 C1 11 2.5 12.5 4.5 12.5" fill="none" stroke="#9a9a9a" stroke-width="1.5"/></svg>
<div class="t" style="left:494px;top:184px;font-size:12px;color:#a6a6a6">重做</div>
<svg style="left:528px;top:188px" width="6" height="3" viewBox="0 0 6 3"><path d="M0.6 0.6 L3 2.8 L5.4 0.6" fill="none" stroke="#aaa" stroke-width="1.2"/></svg>
<svg style="left:546px;top:183px" width="16" height="16" viewBox="0 0 16 16"><rect x="0.5" y="0.5" width="14" height="11" fill="none" stroke="#9a9a9a"/><path d="M0.5 3.5 H14.5 M0.5 6.5 H14.5 M0.5 9 H14.5 M5 0.5 V11.5" stroke="#b5b5b5"/><path d="M4 14 H12 M6 12.5 L4 14 L6 15.5 M10 12.5 L12 14 L10 15.5" fill="none" stroke="#888"/></svg>
<div class="t" style="left:565px;top:184px;font-size:12px;color:#a6a6a6">共享工作簿(旧版)</div>
<svg style="left:680px;top:186px" width="7" height="9" viewBox="0 0 7 9"><path d="M0 0.5 H7" stroke="#555"/><path d="M0 4 H7 L3.5 8 Z" fill="#555"/></svg>
<div class="a" style="left:332px;top:215px;width:102px;height:28px;border:1px solid #d6d6d6;border-radius:4px;background:#fff"></div>
<div class="t" style="left:339px;top:223px;font-size:13px;color:#262626">D15</div>
<svg style="left:418px;top:226px" width="11" height="7" viewBox="0 0 11 7"><path d="M0.8 0.8 L5.5 5.5 L10.2 0.8" fill="none" stroke="#444" stroke-width="1.3"/></svg>
<div class="a" style="left:443px;top:224px;width:2px;height:2px;background:#777"></div>
<div class="a" style="left:443px;top:228.5px;width:2px;height:2px;background:#777"></div>
<div class="a" style="left:443px;top:233px;width:2px;height:2px;background:#777"></div>
<div class="a" style="left:455px;top:215px;width:73px;height:28px;border:1px solid #d6d6d6;border-radius:4px;background:#fff"></div>
<svg style="left:461px;top:222px" width="13" height="13" viewBox="0 0 13 13"><path d="M0.5 0.5 L12.5 12.5 M12.5 0.5 L0.5 12.5" stroke="#9a9a9a" stroke-width="1"/></svg>
<svg style="left:483px;top:223px" width="16" height="11" viewBox="0 0 16 11"><path d="M0.5 5.5 L5.5 10.5 L15.5 0.5" fill="none" stroke="#9a9a9a" stroke-width="1"/></svg>
<div class="t" style="left:507px;top:220px;font-size:17px;color:#333;font-family:'Liberation Serif',serif"><i>f</i><i style="font-size:13px">x</i></div>
<div class="a" style="left:532px;top:215px;width:900px;height:28px;border:1px solid #d6d6d6;border-radius:4px;background:#fff"></div>
<div class="t" style="left:544px;top:222px;font-size:13px;color:#262626">17.955</div>
<div class="a" style="left:353px;top:269px;width:1061px;height:446px;background:#fff"></div>
<div class="a" style="left:324px;top:250px;width:1090px;height:18px;background:#f0f0f0"></div>
<div class="a" style="left:324px;top:269px;width:28px;height:446px;background:#f0f0f0"></div>
<div class="a" style="left:600px;top:250px;width:72px;height:18px;background:#d2d2d2"></div>
<div class="a" style="left:324px;top:268px;width:1090px;height:1px;background:#9b9b9b"></div>
<div class="a" style="left:600px;top:267px;width:73px;height:2px;background:#107c41"></div>
<div class="a" style="left:462px;top:250px;width:1px;height:18px;background:#a4a4a4"></div>
<div class="a" style="left:545px;top:250px;width:1px;height:18px;background:#a4a4a4"></div>
<div class="a" style="left:600px;top:250px;width:1px;height:18px;background:#a4a4a4"></div>
<div class="a" style="left:672px;top:250px;width:1px;height:18px;background:#a4a4a4"></div>
<div class="a" style="left:744px;top:250px;width:1px;height:18px;background:#a4a4a4"></div>
<div class="a" style="left:816px;top:250px;width:1px;height:18px;background:#a4a4a4"></div>
<div class="a" style="left:888px;top:250px;width:1px;height:18px;background:#a4a4a4"></div>
<div class="a" style="left:960px;top:250px;width:1px;height:18px;background:#a4a4a4"></div>
<div class="a" style="left:1032px;top:250px;width:1px;height:18px;background:#a4a4a4"></div>
<div class="a" style="left:1104px;top:250px;width:1px;height:18px;background:#a4a4a4"></div>
<div class="a" style="left:1176px;top:250px;width:1px;height:18px;background:#a4a4a4"></div>
<div class="a" style="left:1248px;top:250px;width:1px;height:18px;background:#a4a4a4"></div>
<div class="a" style="left:1320px;top:250px;width:1px;height:18px;background:#a4a4a4"></div>
<div class="a" style="left:1392px;top:250px;width:1px;height:18px;background:#a4a4a4"></div>
<div class="a" style="left:1464px;top:250px;width:1px;height:18px;background:#a4a4a4"></div>
<div class="a" style="left:352px;top:250px;width:1px;height:465px;background:#9b9b9b"></div>
<svg style="left:338px;top:254px" width="12" height="12" viewBox="0 0 12 12"><path d="M11.5 0 V11.5 H0 Z" fill="#c4c4c4"/></svg>
<div class="t" style="left:353px;top:253px;width:110px;text-align:center;font-size:15.5px;transform:scaleX(0.905);color:#262626">A</div>
<div class="t" style="left:463px;top:253px;width:83px;text-align:center;font-size:15.5px;transform:scaleX(0.905);color:#262626">B</div>
<div class="t" style="left:546px;top:253px;width:55px;text-align:center;font-size:15.5px;transform:scaleX(0.905);color:#262626">C</div>
<div class="t" style="left:601px;top:253px;width:72px;text-align:center;font-size:15.5px;transform:scaleX(0.905);color:#107c41">D</div>
<div class="t" style="left:673px;top:253px;width:72px;text-align:center;font-size:15.5px;transform:scaleX(0.905);color:#262626">E</div>
<div class="t" style="left:745px;top:253px;width:72px;text-align:center;font-size:15.5px;transform:scaleX(0.905);color:#262626">F</div>
<div class="t" style="left:817px;top:253px;width:72px;text-align:center;font-size:15.5px;transform:scaleX(0.905);color:#262626">G</div>
<div class="t" style="left:889px;top:253px;width:72px;text-align:center;font-size:15.5px;transform:scaleX(0.905);color:#262626">H</div>
<div class="t" style="left:961px;top:253px;width:72px;text-align:center;font-size:15.5px;transform:scaleX(0.905);color:#262626">I</div>
<div class="t" style="left:1033px;top:253px;width:72px;text-align:center;font-size:15.5px;transform:scaleX(0.905);color:#262626">J</div>
<div class="t" style="left:1105px;top:253px;width:72px;text-align:center;font-size:15.5px;transform:scaleX(0.905);color:#262626">K</div>
<div class="t" style="left:1177px;top:253px;width:72px;text-align:center;font-size:15.5px;transform:scaleX(0.905);color:#262626">L</div>
<div class="t" style="left:1249px;top:253px;width:72px;text-align:center;font-size:15.5px;transform:scaleX(0.905);color:#262626">M</div>
<div class="t" style="left:1321px;top:253px;width:72px;text-align:center;font-size:15.5px;transform:scaleX(0.905);color:#262626">N</div>
<div class="t" style="left:1393px;top:253px;width:72px;text-align:center;font-size:15.5px;transform:scaleX(0.905);color:#262626">O</div>
<div class="a" style="left:462px;top:269px;width:1px;height:446px;background:#e1e1e1"></div>
<div class="a" style="left:545px;top:269px;width:1px;height:446px;background:#e1e1e1"></div>
<div class="a" style="left:600px;top:269px;width:1px;height:446px;background:#e1e1e1"></div>
<div class="a" style="left:672px;top:269px;width:1px;height:446px;background:#e1e1e1"></div>
<div class="a" style="left:744px;top:269px;width:1px;height:446px;background:#e1e1e1"></div>
<div class="a" style="left:816px;top:269px;width:1px;height:446px;background:#e1e1e1"></div>
<div class="a" style="left:888px;top:269px;width:1px;height:446px;background:#e1e1e1"></div>
<div class="a" style="left:960px;top:269px;width:1px;height:446px;background:#e1e1e1"></div>
<div class="a" style="left:1032px;top:269px;width:1px;height:446px;background:#e1e1e1"></div>
<div class="a" style="left:1104px;top:269px;width:1px;height:446px;background:#e1e1e1"></div>
<div class="a" style="left:1176px;top:269px;width:1px;height:446px;background:#e1e1e1"></div>
<div class="a" style="left:1248px;top:269px;width:1px;height:446px;background:#e1e1e1"></div>
<div class="a" style="left:1320px;top:269px;width:1px;height:446px;background:#e1e1e1"></div>
<div class="a" style="left:1392px;top:269px;width:1px;height:446px;background:#e1e1e1"></div>
<div class="a" style="left:1464px;top:269px;width:1px;height:446px;background:#e1e1e1"></div>
<div class="a" style="left:353px;top:287px;width:1061px;height:1px;background:#e1e1e1"></div>
<div class="a" style="left:324px;top:287px;width:28px;height:1px;background:#b8b8b8"></div>
<div class="a" style="left:353px;top:306px;width:1061px;height:1px;background:#e1e1e1"></div>
<div class="a" style="left:324px;top:306px;width:28px;height:1px;background:#b8b8b8"></div>
<div class="a" style="left:353px;top:325px;width:1061px;height:1px;background:#e1e1e1"></div>
<div class="a" style="left:324px;top:325px;width:28px;height:1px;background:#b8b8b8"></div>
<div class="a" style="left:353px;top:344px;width:1061px;height:1px;background:#e1e1e1"></div>
<div class="a" style="left:324px;top:344px;width:28px;height:1px;background:#b8b8b8"></div>
<div class="a" style="left:353px;top:363px;width:1061px;height:1px;background:#e1e1e1"></div>
<div class="a" style="left:324px;top:363px;width:28px;height:1px;background:#b8b8b8"></div>
<div class="a" style="left:353px;top:382px;width:1061px;height:1px;background:#e1e1e1"></div>
<div class="a" style="left:324px;top:382px;width:28px;height:1px;background:#b8b8b8"></div>
<div class="a" style="left:353px;top:401px;width:1061px;height:1px;background:#e1e1e1"></div>
<div class="a" style="left:324px;top:401px;width:28px;height:1px;background:#b8b8b8"></div>
<div class="a" style="left:353px;top:420px;width:1061px;height:1px;background:#e1e1e1"></div>
<div class="a" style="left:324px;top:420px;width:28px;height:1px;background:#b8b8b8"></div>
<div class="a" style="left:353px;top:439px;width:1061px;height:1px;background:#e1e1e1"></div>
<div class="a" style="left:324px;top:439px;width:28px;height:1px;background:#b8b8b8"></div>
<div class="a" style="left:353px;top:458px;width:1061px;height:1px;background:#e1e1e1"></div>
<div class="a" style="left:324px;top:458px;width:28px;height:1px;background:#b8b8b8"></div>
<div class="a" style="left:353px;top:477px;width:1061px;height:1px;background:#e1e1e1"></div>
<div class="a" style="left:324px;top:477px;width:28px;height:1px;background:#b8b8b8"></div>
<div class="a" style="left:353px;top:496px;width:1061px;height:1px;background:#e1e1e1"></div>
<div class="a" style="left:324px;top:496px;width:28px;height:1px;background:#b8b8b8"></div>
<div class="a" style="left:353px;top:515px;width:1061px;height:1px;background:#e1e1e1"></div>
<div class="a" style="left:324px;top:515px;width:28px;height:1px;background:#b8b8b8"></div>
<div class="a" style="left:353px;top:534px;width:1061px;height:1px;background:#e1e1e1"></div>
<div class="a" style="left:324px;top:534px;width:28px;height:1px;background:#b8b8b8"></div>
<div class="a" style="left:353px;top:553px;width:1061px;height:1px;background:#e1e1e1"></div>
<div class="a" style="left:324px;top:553px;width:28px;height:1px;background:#b8b8b8"></div>
<div class="a" style="left:353px;top:572px;width:1061px;height:1px;background:#e1e1e1"></div>
<div class="a" style="left:324px;top:572px;width:28px;height:1px;background:#b8b8b8"></div>
<div class="a" style="left:353px;top:591px;width:1061px;height:1px;background:#e1e1e1"></div>
<div class="a" style="left:324px;top:591px;width:28px;height:1px;background:#b8b8b8"></div>
<div class="a" style="left:353px;top:610px;width:1061px;height:1px;background:#e1e1e1"></div>
<div class="a" style="left:324px;top:610px;width:28px;height:1px;background:#b8b8b8"></div>
<div class="a" style="left:353px;top:629px;width:1061px;height:1px;background:#e1e1e1"></div>
<div class="a" style="left:324px;top:629px;width:28px;height:1px;background:#b8b8b8"></div>
<div class="a" style="left:353px;top:648px;width:1061px;height:1px;background:#e1e1e1"></div>
<div class="a" style="left:324px;top:648px;width:28px;height:1px;background:#b8b8b8"></div>
<div class="a" style="left:353px;top:667px;width:1061px;height:1px;background:#e1e1e1"></div>
<div class="a" style="left:324px;top:667px;width:28px;height:1px;background:#b8b8b8"></div>
<div class="a" style="left:353px;top:686px;width:1061px;height:1px;background:#e1e1e1"></div>
<div class="a" style="left:324px;top:686px;width:28px;height:1px;background:#b8b8b8"></div>
<div class="a" style="left:353px;top:705px;width:1061px;height:1px;background:#e1e1e1"></div>
<div class="a" style="left:324px;top:705px;width:28px;height:1px;background:#b8b8b8"></div>
<div class="a" style="left:353px;top:724px;width:1061px;height:1px;background:#e1e1e1"></div>
<div class="a" style="left:324px;top:724px;width:28px;height:1px;background:#b8b8b8"></div>
<div class="a" style="left:324px;top:535px;width:28px;height:18px;background:#d2d2d2"></div>
<div class="a" style="left:351px;top:534px;width:2px;height:20px;background:#107c41"></div>
<div class="t" style="left:324px;top:272px;width:28px;text-align:center;font-size:15.5px;transform:scaleX(0.905);color:#262626">1</div>
<div class="t" style="left:324px;top:291px;width:28px;text-align:center;font-size:15.5px;transform:scaleX(0.905);color:#262626">2</div>
<div class="t" style="left:324px;top:310px;width:28px;text-align:center;font-size:15.5px;transform:scaleX(0.905);color:#262626">3</div>
<div class="t" style="left:324px;top:329px;width:28px;text-align:center;font-size:15.5px;transform:scaleX(0.905);color:#262626">4</div>
<div class="t" style="left:324px;top:348px;width:28px;text-align:center;font-size:15.5px;transform:scaleX(0.905);color:#262626">5</div>
<div class="t" style="left:324px;top:367px;width:28px;text-align:center;font-size:15.5px;transform:scaleX(0.905);color:#262626">6</div>
<div class="t" style="left:324px;top:386px;width:28px;text-align:center;font-size:15.5px;transform:scaleX(0.905);color:#262626">7</div>
<div class="t" style="left:324px;top:405px;width:28px;text-align:center;font-size:15.5px;transform:scaleX(0.905);color:#262626">8</div>
<div class="t" style="left:324px;top:424px;width:28px;text-align:center;font-size:15.5px;transform:scaleX(0.905);color:#262626">9</div>
<div class="t" style="left:324px;top:443px;width:28px;text-align:center;font-size:15.5px;transform:scaleX(0.905);color:#262626">10</div>
<div class="t" style="left:324px;top:462px;width:28px;text-align:center;font-size:15.5px;transform:scaleX(0.905);color:#262626">11</div>
<div class="t" style="left:324px;top:481px;width:28px;text-align:center;font-size:15.5px;transform:scaleX(0.905);color:#262626">12</div>
<div class="t" style="left:324px;top:500px;width:28px;text-align:center;font-size:15.5px;transform:scaleX(0.905);color:#262626">13</div>
<div class="t" style="left:324px;top:519px;width:28px;text-align:center;font-size:15.5px;transform:scaleX(0.905);color:#262626">14</div>
<div class="t" style="left:324px;top:538px;width:28px;text-align:center;font-size:15.5px;transform:scaleX(0.905);color:#107c41">15</div>
<div class="t" style="left:324px;top:557px;width:28px;text-align:center;font-size:15.5px;transform:scaleX(0.905);color:#262626">16</div>
<div class="t" style="left:324px;top:576px;width:28px;text-align:center;font-size:15.5px;transform:scaleX(0.905);color:#262626">17</div>
<div class="t" style="left:324px;top:595px;width:28px;text-align:center;font-size:15.5px;transform:scaleX(0.905);color:#262626">18</div>
<div class="t" style="left:324px;top:614px;width:28px;text-align:center;font-size:15.5px;transform:scaleX(0.905);color:#262626">19</div>
<div class="t" style="left:324px;top:633px;width:28px;text-align:center;font-size:15.5px;transform:scaleX(0.905);color:#262626">20</div>
<div class="t" style="left:324px;top:652px;width:28px;text-align:center;font-size:15.5px;transform:scaleX(0.905);color:#262626">21</div>
<div class="t" style="left:324px;top:671px;width:28px;text-align:center;font-size:15.5px;transform:scaleX(0.905);color:#262626">22</div>
<div class="t" style="left:324px;top:690px;width:28px;text-align:center;font-size:15.5px;transform:scaleX(0.905);color:#262626">23</div>
<div class="t" style="left:324px;top:709px;width:28px;text-align:center;font-size:15.5px;transform:scaleX(0.905);color:#262626">24</div>
<div class="t" style="left:355px;top:272px;font-size:15.5px;color:#000;transform:scaleX(0.905);transform-origin:0 0">Transaction_ID</div>
<div class="t" style="left:465px;top:272px;font-size:15.5px;color:#000;transform:scaleX(0.905);transform-origin:0 0">Product_ID</div>
<div class="t" style="left:548px;top:272px;font-size:15.5px;color:#000;transform:scaleX(0.905);transform-origin:0 0">Price</div>
<div class="t" style="right:954px;top:291px;font-size:15.5px;text-align:right;color:#000;transform:scaleX(0.905);transform-origin:100% 0">1001</div>
<div class="t" style="right:871px;top:291px;font-size:15.5px;text-align:right;color:#000;transform:scaleX(0.905);transform-origin:100% 0">1</div>
<div class="t" style="right:816px;top:291px;font-size:15.5px;text-align:right;color:#000;transform:scaleX(0.905);transform-origin:100% 0">$5.95</div>
<div class="t" style="right:744px;top:291px;font-size:15.5px;text-align:right;color:#000;transform:scaleX(0.905);transform-origin:100% 0">5.355</div>
<div class="t" style="right:954px;top:310px;font-size:15.5px;text-align:right;color:#000;transform:scaleX(0.905);transform-origin:100% 0">1002</div>
<div class="t" style="right:871px;top:310px;font-size:15.5px;text-align:right;color:#000;transform:scaleX(0.905);transform-origin:100% 0">2</div>
<div class="t" style="right:816px;top:310px;font-size:15.5px;text-align:right;color:#000;transform:scaleX(0.905);transform-origin:100% 0">$6.95</div>
<div class="t" style="right:744px;top:310px;font-size:15.5px;text-align:right;color:#000;transform:scaleX(0.905);transform-origin:100% 0">6.255</div>
<div class="t" style="right:954px;top:329px;font-size:15.5px;text-align:right;color:#000;transform:scaleX(0.905);transform-origin:100% 0">1003</div>
<div class="t" style="right:871px;top:329px;font-size:15.5px;text-align:right;color:#000;transform:scaleX(0.905);transform-origin:100% 0">3</div>
<div class="t" style="right:816px;top:329px;font-size:15.5px;text-align:right;color:#000;transform:scaleX(0.905);transform-origin:100% 0">$7.95</div>
<div class="t" style="right:744px;top:329px;font-size:15.5px;text-align:right;color:#000;transform:scaleX(0.905);transform-origin:100% 0">7.155</div>
<div class="t" style="right:954px;top:348px;font-size:15.5px;text-align:right;color:#000;transform:scaleX(0.905);transform-origin:100% 0">1004</div>
<div class="t" style="right:871px;top:348px;font-size:15.5px;text-align:right;color:#000;transform:scaleX(0.905);transform-origin:100% 0">4</div>
<div class="t" style="right:816px;top:348px;font-size:15.5px;text-align:right;color:#000;transform:scaleX(0.905);transform-origin:100% 0">$8.95</div>
<div class="t" style="right:744px;top:348px;font-size:15.5px;text-align:right;color:#000;transform:scaleX(0.905);transform-origin:100% 0">8.055</div>
<div class="t" style="right:954px;top:367px;font-size:15.5px;text-align:right;color:#000;transform:scaleX(0.905);transform-origin:100% 0">1005</div>
<div class="t" style="right:871px;top:367px;font-size:15.5px;text-align:right;color:#000;transform:scaleX(0.905);transform-origin:100% 0">5</div>
<div class="t" style="right:816px;top:367px;font-size:15.5px;text-align:right;color:#000;transform:scaleX(0.905);transform-origin:100% 0">$9.95</div>
<div class="t" style="right:744px;top:367px;font-size:15.5px;text-align:right;color:#000;transform:scaleX(0.905);transform-origin:100% 0">8.955</div>
<div class="t" style="right:954px;top:386px;font-size:15.5px;text-align:right;color:#000;transform:scaleX(0.905);transform-origin:100% 0">1006</div>
<div class="t" style="right:871px;top:386px;font-size:15.5px;text-align:right;color:#000;transform:scaleX(0.905);transform-origin:100% 0">6</div>
<div class="t" style="right:816px;top:386px;font-size:15.5px;text-align:right;color:#000;transform:scaleX(0.905);transform-origin:100% 0">$11.95</div>
<div class="t" style="right:744px;top:386px;font-size:15.5px;text-align:right;color:#000;transform:scaleX(0.905);transform-origin:100% 0">10.755</div>
<div class="t" style="right:954px;top:405px;font-size:15.5px;text-align:right;color:#000;transform:scaleX(0.905);transform-origin:100% 0">1007</div>
<div class="t" style="right:871px;top:405px;font-size:15.5px;text-align:right;color:#000;transform:scaleX(0.905);transform-origin:100% 0">7</div>
<div class="t" style="right:816px;top:405px;font-size:15.5px;text-align:right;color:#000;transform:scaleX(0.905);transform-origin:100% 0">$12.95</div>
<div class="t" style="right:744px;top:405px;font-size:15.5px;text-align:right;color:#000;transform:scaleX(0.905);transform-origin:100% 0">11.655</div>
<div class="t" style="right:954px;top:424px;font-size:15.5px;text-align:right;color:#000;transform:scaleX(0.905);transform-origin:100% 0">1008</div>
<div class="t" style="right:871px;top:424px;font-size:15.5px;text-align:right;color:#000;transform:scaleX(0.905);transform-origin:100% 0">8</div>
<div class="t" style="right:816px;top:424px;font-size:15.5px;text-align:right;color:#000;transform:scaleX(0.905);transform-origin:100% 0">$13.95</div>
<div class="t" style="right:744px;top:424px;font-size:15.5px;text-align:right;color:#000;transform:scaleX(0.905);transform-origin:100% 0">12.555</div>
<div class="t" style="right:954px;top:443px;font-size:15.5px;text-align:right;color:#000;transform:scaleX(0.905);transform-origin:100% 0">1009</div>
<div class="t" style="right:871px;top:443px;font-size:15.5px;text-align:right;color:#000;transform:scaleX(0.905);transform-origin:100% 0">9</div>
<div class="t" style="right:816px;top:443px;font-size:15.5px;text-align:right;color:#000;transform:scaleX(0.905);transform-origin:100% 0">$14.95</div>
<div class="t" style="right:744px;top:443px;font-size:15.5px;text-align:right;color:#000;transform:scaleX(0.905);transform-origin:100% 0">13.455</div>
<div class="t" style="right:954px;top:462px;font-size:15.5px;text-align:right;color:#000;transform:scaleX(0.905);transform-origin:100% 0">1010</div>
<div class="t" style="right:871px;top:462px;font-size:15.5px;text-align:right;color:#000;transform:scaleX(0.905);transform-origin:100% 0">10</div>
<div class="t" style="right:816px;top:462px;font-size:15.5px;text-align:right;color:#000;transform:scaleX(0.905);transform-origin:100% 0">$15.95</div>
<div class="t" style="right:744px;top:462px;font-size:15.5px;text-align:right;color:#000;transform:scaleX(0.905);transform-origin:100% 0">14.355</div>
<div class="t" style="right:954px;top:481px;font-size:15.5px;text-align:right;color:#000;transform:scaleX(0.905);transform-origin:100% 0">1011</div>
<div class="t" style="right:871px;top:481px;font-size:15.5px;text-align:right;color:#000;transform:scaleX(0.905);transform-origin:100% 0">11</div>
<div class="t" style="right:816px;top:481px;font-size:15.5px;text-align:right;color:#000;transform:scaleX(0.905);transform-origin:100% 0">$16.95</div>
<div class="t" style="right:744px;top:481px;font-size:15.5px;text-align:right;color:#000;transform:scaleX(0.905);transform-origin:100% 0">15.255</div>
<div class="t" style="right:954px;top:500px;font-size:15.5px;text-align:right;color:#000;transform:scaleX(0.905);transform-origin:100% 0">1012</div>
<div class="t" style="right:871px;top:500px;font-size:15.5px;text-align:right;color:#000;transform:scaleX(0.905);transform-origin:100% 0">12</div>
<div class="t" style="right:816px;top:500px;font-size:15.5px;text-align:right;color:#000;transform:scaleX(0.905);transform-origin:100% 0">$17.95</div>
<div class="t" style="right:744px;top:500px;font-size:15.5px;text-align:right;color:#000;transform:scaleX(0.905);transform-origin:100% 0">16.155</div>
<div class="t" style="right:954px;top:519px;font-size:15.5px;text-align:right;color:#000;transform:scaleX(0.905);transform-origin:100% 0">1013</div>
<div class="t" style="right:871px;top:519px;font-size:15.5px;text-align:right;color:#000;transform:scaleX(0.905);transform-origin:100% 0">13</div>
<div class="t" style="right:816px;top:519px;font-size:15.5px;text-align:right;color:#000;transform:scaleX(0.905);transform-origin:100% 0">$18.95</div>
<div class="t" style="right:744px;top:519px;font-size:15.5px;text-align:right;color:#000;transform:scaleX(0.905);transform-origin:100% 0">17.055</div>
<div class="t" style="right:954px;top:538px;font-size:15.5px;text-align:right;color:#000;transform:scaleX(0.905);transform-origin:100% 0">1014</div>
<div class="t" style="right:871px;top:538px;font-size:15.5px;text-align:right;color:#000;transform:scaleX(0.905);transform-origin:100% 0">14</div>
<div class="t" style="right:816px;top:538px;font-size:15.5px;text-align:right;color:#000;transform:scaleX(0.905);transform-origin:100% 0">$19.95</div>
<div class="t" style="right:744px;top:538px;font-size:15.5px;text-align:right;color:#000;transform:scaleX(0.905);transform-origin:100% 0">17.955</div>
<div class="t" style="right:954px;top:557px;font-size:15.5px;text-align:right;color:#000;transform:scaleX(0.905);transform-origin:100% 0">1015</div>
<div class="t" style="right:871px;top:557px;font-size:15.5px;text-align:right;color:#000;transform:scaleX(0.905);transform-origin:100% 0">15</div>
<div class="t" style="right:816px;top:557px;font-size:15.5px;text-align:right;color:#000;transform:scaleX(0.905);transform-origin:100% 0">$20.95</div>
<div class="t" style="right:744px;top:557px;font-size:15.5px;text-align:right;color:#000;transform:scaleX(0.905);transform-origin:100% 0">18.855</div>
<div class="t" style="right:954px;top:576px;font-size:15.5px;text-align:right;color:#000;transform:scaleX(0.905);transform-origin:100% 0">1016</div>
<div class="t" style="right:871px;top:576px;font-size:15.5px;text-align:right;color:#000;transform:scaleX(0.905);transform-origin:100% 0">16</div>
<div class="t" style="right:816px;top:576px;font-size:15.5px;text-align:right;color:#000;transform:scaleX(0.905);transform-origin:100% 0">$21.95</div>
<div class="t" style="right:744px;top:576px;font-size:15.5px;text-align:right;color:#000;transform:scaleX(0.905);transform-origin:100% 0">19.755</div>
<div class="t" style="right:954px;top:595px;font-size:15.5px;text-align:right;color:#000;transform:scaleX(0.905);transform-origin:100% 0">1017</div>
<div class="t" style="right:871px;top:595px;font-size:15.5px;text-align:right;color:#000;transform:scaleX(0.905);transform-origin:100% 0">17</div>
<div class="t" style="right:816px;top:595px;font-size:15.5px;text-align:right;color:#000;transform:scaleX(0.905);transform-origin:100% 0">$22.95</div>
<div class="t" style="right:744px;top:595px;font-size:15.5px;text-align:right;color:#000;transform:scaleX(0.905);transform-origin:100% 0">20.655</div>
<div class="t" style="right:954px;top:614px;font-size:15.5px;text-align:right;color:#000;transform:scaleX(0.905);transform-origin:100% 0">1018</div>
<div class="t" style="right:871px;top:614px;font-size:15.5px;text-align:right;color:#000;transform:scaleX(0.905);transform-origin:100% 0">18</div>
<div class="t" style="right:816px;top:614px;font-size:15.5px;text-align:right;color:#000;transform:scaleX(0.905);transform-origin:100% 0">$23.95</div>
<div class="t" style="right:744px;top:614px;font-size:15.5px;text-align:right;color:#000;transform:scaleX(0.905);transform-origin:100% 0">21.555</div>
<div class="t" style="right:954px;top:633px;font-size:15.5px;text-align:right;color:#000;transform:scaleX(0.905);transform-origin:100% 0">1019</div>
<div class="t" style="right:871px;top:633px;font-size:15.5px;text-align:right;color:#000;transform:scaleX(0.905);transform-origin:100% 0">19</div>
<div class="t" style="right:816px;top:633px;font-size:15.5px;text-align:right;color:#000;transform:scaleX(0.905);transform-origin:100% 0">$24.95</div>
<div class="t" style="right:744px;top:633px;font-size:15.5px;text-align:right;color:#000;transform:scaleX(0.905);transform-origin:100% 0">22.455</div>
<div class="a" style="left:599px;top:533px;width:75px;height:22px;border:2px solid #107c41"></div>
<div class="a" style="left:670px;top:551px;width:5px;height:5px;background:#107c41;outline:1px solid #fff"></div>
<svg style="left:0;top:0" width="1414" height="715" viewBox="0 0 1414 715"><rect x="816.5" y="287.5" width="567" height="283" fill="#fff" stroke="#888" stroke-width="1"/><path d="M850.5 537.5 H1304.5" stroke="#8c8c8c" stroke-width="1"/><text x="838" y="541.0" font-size="11" text-anchor="end" fill="#262626" font-family="Liberation Sans">0</text><path d="M850.5 490.5 H1304.5" stroke="#8c8c8c" stroke-width="1"/><text x="838" y="494.0" font-size="11" text-anchor="end" fill="#262626" font-family="Liberation Sans">5</text><path d="M850.5 442.5 H1304.5" stroke="#8c8c8c" stroke-width="1"/><text x="838" y="446.0" font-size="11" text-anchor="end" fill="#262626" font-family="Liberation Sans">10</text><path d="M850.5 395.5 H1304.5" stroke="#8c8c8c" stroke-width="1"/><text x="838" y="399.0" font-size="11" text-anchor="end" fill="#262626" font-family="Liberation Sans">15</text><path d="M850.5 348.5 H1304.5" stroke="#8c8c8c" stroke-width="1"/><text x="838" y="352.0" font-size="11" text-anchor="end" fill="#262626" font-family="Liberation Sans">20</text><path d="M850.5 301.5 H1304.5" stroke="#8c8c8c" stroke-width="1"/><text x="838" y="305.0" font-size="11" text-anchor="end" fill="#262626" font-family="Liberation Sans">25</text><path d="M850.5 301.5 V537" stroke="#8c8c8c" stroke-width="1"/><rect x="857.9" y="486.6" width="9" height="50.4" fill="#5b9bd5"/><text x="862.4" y="559" font-size="11" text-anchor="middle" fill="#262626" font-family="Liberation Sans">1</text><rect x="881.8" y="478.1" width="9" height="58.9" fill="#5b9bd5"/><text x="886.3" y="559" font-size="11" text-anchor="middle" fill="#262626" font-family="Liberation Sans">2</text><rect x="905.7" y="469.6" width="9" height="67.4" fill="#5b9bd5"/><text x="910.2" y="559" font-size="11" text-anchor="middle" fill="#262626" font-family="Liberation Sans">3</text><rect x="929.6" y="461.1" width="9" height="75.9" fill="#5b9bd5"/><text x="934.1" y="559" font-size="11" text-anchor="middle" fill="#262626" font-family="Liberation Sans">4</text><rect x="953.5" y="452.6" width="9" height="84.4" fill="#5b9bd5"/><text x="958.0" y="559" font-size="11" text-anchor="middle" fill="#262626" font-family="Liberation Sans">5</text><rect x="977.4" y="435.7" width="9" height="101.3" fill="#5b9bd5"/><text x="981.9" y="559" font-size="11" text-anchor="middle" fill="#262626" font-family="Liberation Sans">6</text><rect x="1001.3" y="427.2" width="9" height="109.8" fill="#5b9bd5"/><text x="1005.8" y="559" font-size="11" text-anchor="middle" fill="#262626" font-family="Liberation Sans">7</text><rect x="1025.2" y="418.7" width="9" height="118.3" fill="#5b9bd5"/><text x="1029.7" y="559" font-size="11" text-anchor="middle" fill="#262626" font-family="Liberation Sans">8</text><rect x="1049.1" y="410.3" width="9" height="126.7" fill="#5b9bd5"/><text x="1053.6" y="559" font-size="11" text-anchor="middle" fill="#262626" font-family="Liberation Sans">9</text><rect x="1073.0" y="401.8" width="9" height="135.2" fill="#5b9bd5"/><text x="1077.5" y="559" font-size="11" text-anchor="middle" fill="#262626" font-family="Liberation Sans">10</text><rect x="1096.9" y="393.3" width="9" height="143.7" fill="#5b9bd5"/><text x="1101.4" y="559" font-size="11" text-anchor="middle" fill="#262626" font-family="Liberation Sans">11</text><rect x="1120.8" y="384.8" width="9" height="152.2" fill="#5b9bd5"/><text x="1125.3" y="559" font-size="11" text-anchor="middle" fill="#262626" font-family="Liberation Sans">12</text><rect x="1144.7" y="376.3" width="9" height="160.7" fill="#5b9bd5"/><text x="1149.2" y="559" font-size="11" text-anchor="middle" fill="#262626" font-family="Liberation Sans">13</text><rect x="1168.6" y="367.9" width="9" height="169.1" fill="#5b9bd5"/><text x="1173.1" y="559" font-size="11" text-anchor="middle" fill="#262626" font-family="Liberation Sans">14</text><rect x="1192.5" y="359.4" width="9" height="177.6" fill="#5b9bd5"/><text x="1197.0" y="559" font-size="11" text-anchor="middle" fill="#262626" font-family="Liberation Sans">15</text><rect x="1216.4" y="350.9" width="9" height="186.1" fill="#5b9bd5"/><text x="1220.9" y="559" font-size="11" text-anchor="middle" fill="#262626" font-family="Liberation Sans">16</text><rect x="1240.3" y="342.4" width="9" height="194.6" fill="#5b9bd5"/><text x="1244.8" y="559" font-size="11" text-anchor="middle" fill="#262626" font-family="Liberation Sans">17</text><rect x="1264.2" y="334.0" width="9" height="203.0" fill="#5b9bd5"/><text x="1268.7" y="559" font-size="11" text-anchor="middle" fill="#262626" font-family="Liberation Sans">18</text><rect x="1288.1" y="325.5" width="9" height="211.5" fill="#5b9bd5"/><text x="1292.6" y="559" font-size="11" text-anchor="middle" fill="#262626" font-family="Liberation Sans">19</text><rect x="1326" y="425" width="7" height="7" fill="#5b9bd5"/></svg>
<div class="t" style="left:1337px;top:421px;font-size:13px;color:#1a1a1a">系列1</div>
<svg style="left:1234px;top:658px" width="170" height="52" viewBox="0 0 170 52"><rect x="0" y="0" width="58" height="52" fill="rgba(128,128,128,0.4)"/><path d="M58 0 H170 V52 H58 Z" fill="rgba(128,128,128,0.32)"/><path d="M0 0 H20 C30 2 40 7 46 13 C49 18 50 24 50 30 V52 H7 V11 C5 8 2 6 0 5 Z" fill="rgba(195,150,150,0.28)"/><path d="M12 21 C13 14 24 12 29 17 C34 12 45 14 46 21 C41 18 35 18 30 21 C25 18 18 18 12 21 Z" fill="#f7f1e4"/><path d="M11.5 30 C10.5 26 11 22 14 20 C12.5 23 12.5 27 13 30 Z" fill="#f7f1e4"/><path d="M45 20 C41 21 38 22 37 25 C39 23 42 22 45 20 Z" fill="#f7f1e4"/><path d="M11 40 C11 32 17 29 23 29 C25 26 25 23 26 20 H31 C32 23 32 26 34 29 C40 29 46 32 46 40 C46 48 39 52 28.5 52 C18 52 11 48 11 40 Z" fill="#f7f1e4"/><path d="M17 40 C22 45.5 34 45.5 39 38.5" fill="none" stroke="rgba(170,130,130,0.55)" stroke-width="1.3"/></svg>
</body></html>
